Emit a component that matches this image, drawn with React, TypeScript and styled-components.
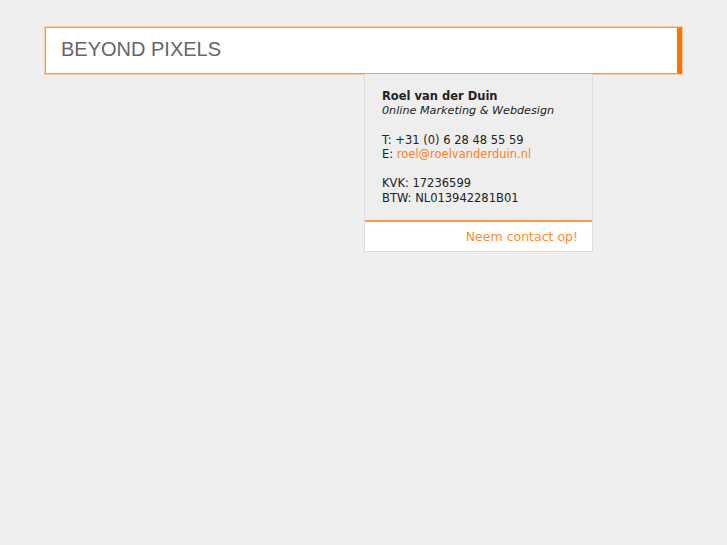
import React from "react";
import styled, { createGlobalStyle } from "styled-components";

const Global = createGlobalStyle`
  html, body { margin: 0; padding: 0; background: #efefef; }
  body { font-family: "DejaVu Sans", sans-serif; }
`;

const Page = styled.div`
  width: 637px;
  margin: 27px auto 0;
`;

const Header = styled.header`
  box-sizing: border-box;
  height: 47px;
  background: #fff;
  border: 1px solid #fb9a4f;
  border-right: 5px solid #ff7400;
  box-shadow: 0 0 0 1px #fcc9a0;
  display: flex;
  align-items: center;
  padding-left: 15px;
`;

const Title = styled.h1`
  margin: 0 0 2px;
  font-family: "Liberation Sans", Arial, sans-serif;
  font-weight: normal;
  font-size: 20px;
  color: #666;
`;

const Row = styled.div`
  display: flex;
`;

const Spacer = styled.div`
  width: 319px;
`;

const Card = styled.div`
  box-sizing: border-box;
  width: 229px;
  border: 1px solid #dcdcdc;
  border-top: none;
  background: #eeeeee;
`;

const Body = styled.div`
  padding: 15px 18px 15px 17px;
  font-size: 11.5px;
  line-height: 14.5px;
  color: #222;
`;

const Line = styled.div<{ $gap?: boolean }>`
  margin-top: ${(p) => (p.$gap ? "14.5px" : "0")};
`;

const Name = styled.div`
  font-weight: bold;
`;

const Sub = styled.div`
  font-style: italic;
  font-size: 11.2px;
`;

const Link = styled.a`
  color: #ff7f1e;
  text-decoration: none;
`;

const Footer = styled.div`
  background: #fff;
  border-top: 2px solid #fb9a4f;
  height: 31px;
  box-sizing: border-box;
  display: flex;
  align-items: center;
  justify-content: flex-end;
  padding-right: 14px;
`;

const Contact = styled.a`
  color: #ff8a2e;
  font-size: 12.5px;
  text-decoration: none;
`;

export default function App() {
  return (
    <>
      <Global />
      <Page>
        <Header>
          <Title>BEYOND PIXELS</Title>
        </Header>
        <Row>
          <Spacer />
          <Card>
            <Body>
              <Name>Roel van der Duin</Name>
              <Sub>0nline Marketing &amp; Webdesign</Sub>
              <Line $gap>T: +31 (0) 6 28 48 55 59</Line>
              <Line>
                E: <Link href="#">roel@roelvanderduin.nl</Link>
              </Line>
              <Line $gap>KVK: 17236599</Line>
              <Line>BTW: NL013942281B01</Line>
            </Body>
            <Footer>
              <Contact href="#">Neem contact op!</Contact>
            </Footer>
          </Card>
        </Row>
      </Page>
    </>
  );
}
